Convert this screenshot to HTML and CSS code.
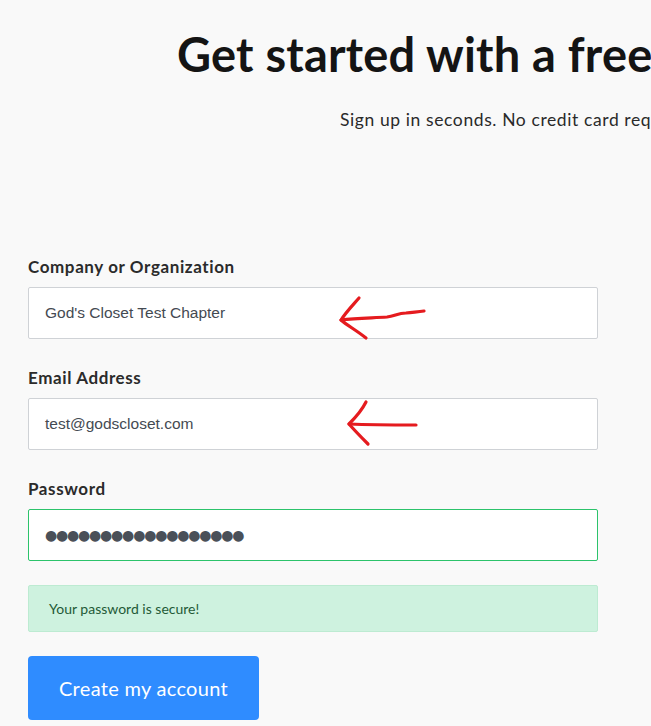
FILE: index.html
```html
<!DOCTYPE html>
<html>
<head>
<meta charset="utf-8">
<link rel="stylesheet" href="styles.css">
</head>
<body>
<div class="page">
  <header class="hero">
    <h1 class="title">Get started with a free account</h1>
    <p class="subtitle">Sign up in seconds. No credit card required.</p>
  </header>
  <form class="form">
    <div class="field">
      <label class="label">Company or Organization</label>
      <div class="input">God's Closet Test Chapter</div>
    </div>
    <div class="field">
      <label class="label">Email Address</label>
      <div class="input">test@godscloset.com</div>
    </div>
    <div class="field">
      <label class="label">Password</label>
      <div class="input input-ok"><span class="dots">●●●●●●●●●●●●●●●●●●</span></div>
    </div>
    <div class="alert">Your password is secure!</div>
    <button type="button" class="btn">Create my account</button>
  </form>
  <svg class="marks" width="651" height="726" viewBox="0 0 651 726">
    <g fill="none" stroke="#e51b1f" stroke-width="3.2" stroke-linecap="round" stroke-linejoin="round">
      <path d="M359 298 C352 306 346 312 341 320 C348 326 356 330 366 338"/>
      <path d="M341 320 C356 318 372 318 387 317 C395 316 398 313 406 313 C414 312 418 312 424 311"/>
      <path d="M366 402 C362 410 356 417 349 424 C356 432 362 438 368 444"/>
      <path d="M349 424 C372 425 395 425 416 425"/>
    </g>
  </svg>
</div>
</body>
</html>
```
FILE: styles.css
```css
html, body {
  margin: 0;
  padding: 0;
  background: #f9f9f9;
}
.page {
  position: relative;
  width: 651px;
  height: 726px;
  overflow: hidden;
  font-family: Lato, "Liberation Sans", sans-serif;
  color: #222;
}
.hero {
  padding-top: 27px;
  height: 256px;
  box-sizing: border-box;
}
.title {
  margin: 0 0 0 177px;
  white-space: nowrap;
  font-size: 47px;
  line-height: 54px;
  font-weight: 700;
  color: #141414;
  letter-spacing: 0.2px;
}
.subtitle {
  margin: 28px 0 0 340px;
  white-space: nowrap;
  font-size: 17.5px;
  line-height: 22px;
  letter-spacing: 0.6px;
  color: #2a2a2a;
}
.form {
  padding-left: 28px;
  width: 570px;
  display: flex;
  flex-direction: column;
}
.field {
  display: flex;
  flex-direction: column;
  gap: 10px;
  margin-bottom: 28px;
}
.label {
  font-size: 17px;
  line-height: 21px;
  font-weight: 700;
  letter-spacing: 0.6px;
  color: #2b2b2b;
}
.input {
  height: 52px;
  box-sizing: border-box;
  border: 1px solid #cfd2d6;
  background: #fff;
  border-radius: 2px;
  padding: 0 16px;
  display: flex;
  align-items: center;
  font-family: "Liberation Sans", Arial, sans-serif;
  font-size: 15.5px;
  color: #444a52;
}
.input-ok {
  border-color: #2cc36b;
}
.dots {
  font-family: "DejaVu Sans", sans-serif;
  font-size: 14px;
  letter-spacing: -1.2px;
  color: #4a5058;
}
.alert {
  margin-top: -4px;
  height: 47px;
  box-sizing: border-box;
  background: #cef2df;
  border: 1px solid #bdebd2;
  border-radius: 2px;
  padding: 0 20px;
  display: flex;
  align-items: center;
  font-size: 14px;
  color: #1f5a37;
}
.btn {
  margin-top: 24px;
  width: 231px;
  height: 64px;
  border: 0;
  border-radius: 4px;
  background: #2f8cff;
  color: #fff;
  font-family: Lato, "Liberation Sans", sans-serif;
  font-size: 20px;
  letter-spacing: 0.3px;
  cursor: pointer;
  padding: 0;
}
.marks {
  position: absolute;
  left: 0;
  top: 0;
  pointer-events: none;
}
```
